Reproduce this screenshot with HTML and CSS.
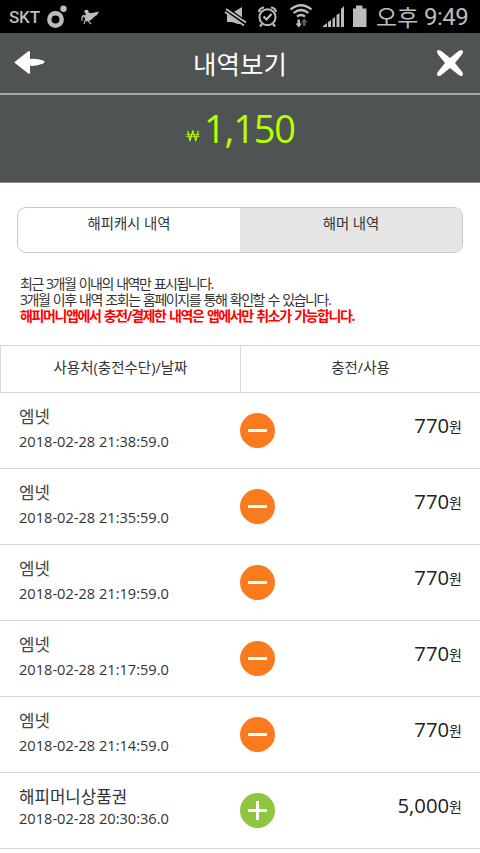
FILE: index.html
```
<!DOCTYPE html>
<html lang="ko">
<head>
<meta charset="utf-8">
<meta name="viewport" content="width=device-width, initial-scale=1">
<title>내역보기</title>
<link rel="stylesheet" href="styles.css">
</head>
<body>
<div class="status">
  <span class="carrier">SKT</span>
  <svg class="notices" width="54" height="33" viewBox="0 0 54 33" fill="#bcbcbc">
    <circle cx="8.500" cy="19.500" r="6.200" fill="none" stroke="#bcbcbc" stroke-width="4.400"/>
    <circle cx="16.500" cy="8.800" r="3.200"/>
    <g transform="translate(3 0)"><path d="M35 10l3 0 1 3 3 0 7-1.500-2 3.500-3 2-3 3-2.500 1-2.500.5-1-4-2 0 1-2 2-1-1-2-1-.5z"/>
    <path d="M34 15l-2 2v4M36 17l-1 4-1 3M38 20l1 2 2 2" fill="none" stroke="#bcbcbc" stroke-width="1.200"/></g>
  </svg>
  <svg class="indicators" width="148" height="33" viewBox="220 0 148 33" fill="#bcbcbc">
    <path d="M227 13h5l10-6v17l-4 0-6-2h-5z"/>
    <path d="M225 9l21 15" stroke="#000" stroke-width="6"/>
    <path d="M226 9l20 13.500M225 12l19 13.500" stroke="#bcbcbc" stroke-width="1.900"/>
    <g fill="none" stroke="#bcbcbc" stroke-width="2"><circle cx="267.500" cy="17.200" r="8"/><path d="M263.500 16.500l3 3 5-5.500M262 24l-2 2.500M273 24l2 2.500M259 12q.500-4 5-4.500M271 7.500q4.500.5 5 4.500" stroke-width="2.200"/></g>
    <g fill="none" stroke="#bcbcbc" stroke-width="2.200"><path d="M290.500 9.500q10.500-8.500 21 0M293.500 13q7.500-6 15 0M297 16.500q4-3 8 0"/></g>
    <path d="M297.500 19.500h2.500v4h2l-3.200 4-3.300-4h2z"/><path d="M303 26h2.500v-3.500h2l-3.200-4-3.300 4h2z" fill="#626262"/>
    <path d="M323 27v-1l4-3v4zM328 27v-5l3-2v7zM332.500 27v-8l2.500-2v10zM336.500 27v-12l3-2v14zM341 27v-18l3-3v21z"/>
    <path d="M356 5.500h6.500v3h4v18.500h-13.500v-18.500h3z"/>
  </svg>
  <span class="ampm">오후</span><span class="clock">9:49</span>
</div>
<header class="header">
  <svg width="32" height="26" viewBox="0 0 32 26" fill="#fff"><path d="M15 1q1 0 1 1v7q7-.8 12.500 1.300 4 1.700 0 3.500-5.500 2.500-12.500 2v7q0 2-2 .5L1.200 13.200q-1.200-1 0-1.800L14 1.500z"/></svg>
  <h1 class="title">내역보기</h1>
  <svg width="30" height="30" viewBox="0 0 30 30" fill="#fff"><path d="M2.500 2.500Q4 1 7 3.500L15 10 23 3.500Q26 1 27.500 2.500T26.500 7L20 15 26.500 23Q29 26 27.500 27.500T23 26.500L15 20 7 26.500Q4 29 2.500 27.500T3.500 23L10 15 3.500 7Q1 4 2.500 2.500z"/></svg>
</header>
<section class="balance"><svg class="won" width="14" height="12" viewBox="0 0 14 12" fill="none" stroke="#b4ff00"><path d="M1.700 1l2.300 9.500L6.800 1l3 9.500L12.300 1" stroke-width="1.200"/><path d="M0 4.500h13.500M0 6.500h13.500" stroke-width=".7"/></svg><span class="total">1,150</span></section>
<main>
  <nav class="tabs"><div class="tab">해피캐시 내역</div><div class="tab tab-shaded">해머 내역</div></nav>
  <div class="notes">
    <p class="note-a">최근 3개월 이내의 내역만 표시됩니다.</p>
    <p class="note-b">3개월 이후 내역 조회는 홈페이지를 통해 확인할 수 있습니다.</p>
    <p class="warning">해피머니앱에서 충전/결제한 내역은 앱에서만 취소가 가능합니다.</p>
  </div>
  <div class="columns"><div class="column">사용처(충전수단)/날짜</div><div class="column">충전/사용</div></div>
  <ul class="list">
    <li class="row"><div class="info"><div class="name">엠넷</div><div class="date">2018-02-28 21:38:59.0</div></div><span class="sign"></span><div class="amount">770<small>원</small></div></li>
    <li class="row"><div class="info"><div class="name">엠넷</div><div class="date">2018-02-28 21:35:59.0</div></div><span class="sign"></span><div class="amount">770<small>원</small></div></li>
    <li class="row"><div class="info"><div class="name">엠넷</div><div class="date">2018-02-28 21:19:59.0</div></div><span class="sign"></span><div class="amount">770<small>원</small></div></li>
    <li class="row"><div class="info"><div class="name">엠넷</div><div class="date">2018-02-28 21:17:59.0</div></div><span class="sign"></span><div class="amount">770<small>원</small></div></li>
    <li class="row"><div class="info"><div class="name">엠넷</div><div class="date">2018-02-28 21:14:59.0</div></div><span class="sign"></span><div class="amount">770<small>원</small></div></li>
    <li class="row"><div class="info"><div class="name name-charge">해피머니상품권</div><div class="date date-charge">2018-02-28 20:30:36.0</div></div><span class="sign plus"></span><div class="amount">5,000<small>원</small></div></li>
  </ul>
</main>
</body>
</html>
```
FILE: styles.css
```
* { box-sizing: border-box; }
body { margin: 0; height: 853px; overflow: hidden; background: #fff; color: #333; font-family: "Open Sans", "Noto Sans CJK KR", sans-serif; }
h1, p, ul { margin: 0; padding: 0; }
svg { display: block; flex: none; }
.status { height: 33px; background: #000; color: #bcbcbc; display: flex; line-height: 33px; white-space: nowrap; }
.carrier { width: 47px; padding-left: 9px; font: 500 17px/34px Roboto, sans-serif; letter-spacing: -.2px; flex: none; }
.indicators { margin-left: 119px; }
.ampm { width: 54px; padding-left: 8px; font: 400 23px/32px "Noto Sans CJK KR", sans-serif; flex: none; }
.clock { font: 24px/34px Roboto, sans-serif; letter-spacing: -.5px; padding-left: 2px; }
.header { height: 62px; background: #505354; border-bottom: 2px solid #a7acad; display: flex; align-items: center; justify-content: space-between; padding: 0 15px 0 14px; }
.title { color: #fff; font: 400 25.5px/60px "Noto Sans CJK KR", sans-serif; margin-right: 1px; }
.balance { height: 88px; background: #505354; border-bottom: 1px solid #888; color: #b4ff00; display: flex; align-items: flex-start; padding-left: 185px; }
.won { margin: 35px 4px 0 1px; }
.total { font-size: 38px; line-height: 66px; letter-spacing: -1.2px; }
.tabs { display: flex; height: 46px; margin: 24px 17px 0; border: 1px solid #c8c8c8; border-radius: 9px; overflow: hidden; }
.tab { flex: 1; text-align: center; font-size: 14.4px; line-height: 32px; }
.tab-shaded { background: #e5e5e5; }
.notes { padding: 23px 19px 0 20px; height: 92px; font-size: 14px; line-height: 16px; white-space: nowrap; word-spacing: 1.2px; }
.note-a { letter-spacing: -1.5px; }
.note-b { letter-spacing: -1.45px; }
.warning { color: #f00; font-weight: 700; letter-spacing: -1.4px; }
.columns { display: flex; height: 48px; border: 1px solid #d8d8d8; border-right: 0; }
.column { flex: 1; text-align: center; font-size: 14.5px; line-height: 44px; }
.column + .column { border-left: 1px solid #d8d8d8; }
.list { list-style: none; }
.row { height: 76px; display: flex; border-bottom: 1px solid #d8d8d8; padding: 0 18px 0 19px; }
.info { width: 221px; padding-top: 12px; white-space: nowrap; }
.name { font-size: 16.8px; line-height: 23px; color: #444; }
.name-charge { color: #333; }
.date { font-size: 14.6px; line-height: 26px; }
.date-charge { line-height: 20px; }
.sign { width: 35px; height: 35px; margin-top: 20px; border-radius: 50%; background: linear-gradient(#fff, #fff) center / 19px 3px no-repeat, #fa7b1d; }
.plus { background: linear-gradient(#fff, #fff) center / 19px 3px no-repeat, linear-gradient(#fff, #fff) center / 3px 19px no-repeat, #8ec63f; }
.amount { margin-left: auto; font-size: 20.3px; line-height: 64px; color: #222; white-space: nowrap; }
.amount small { font-size: 14px; display: inline-block; line-height: 20px; vertical-align: 1px; }
```
